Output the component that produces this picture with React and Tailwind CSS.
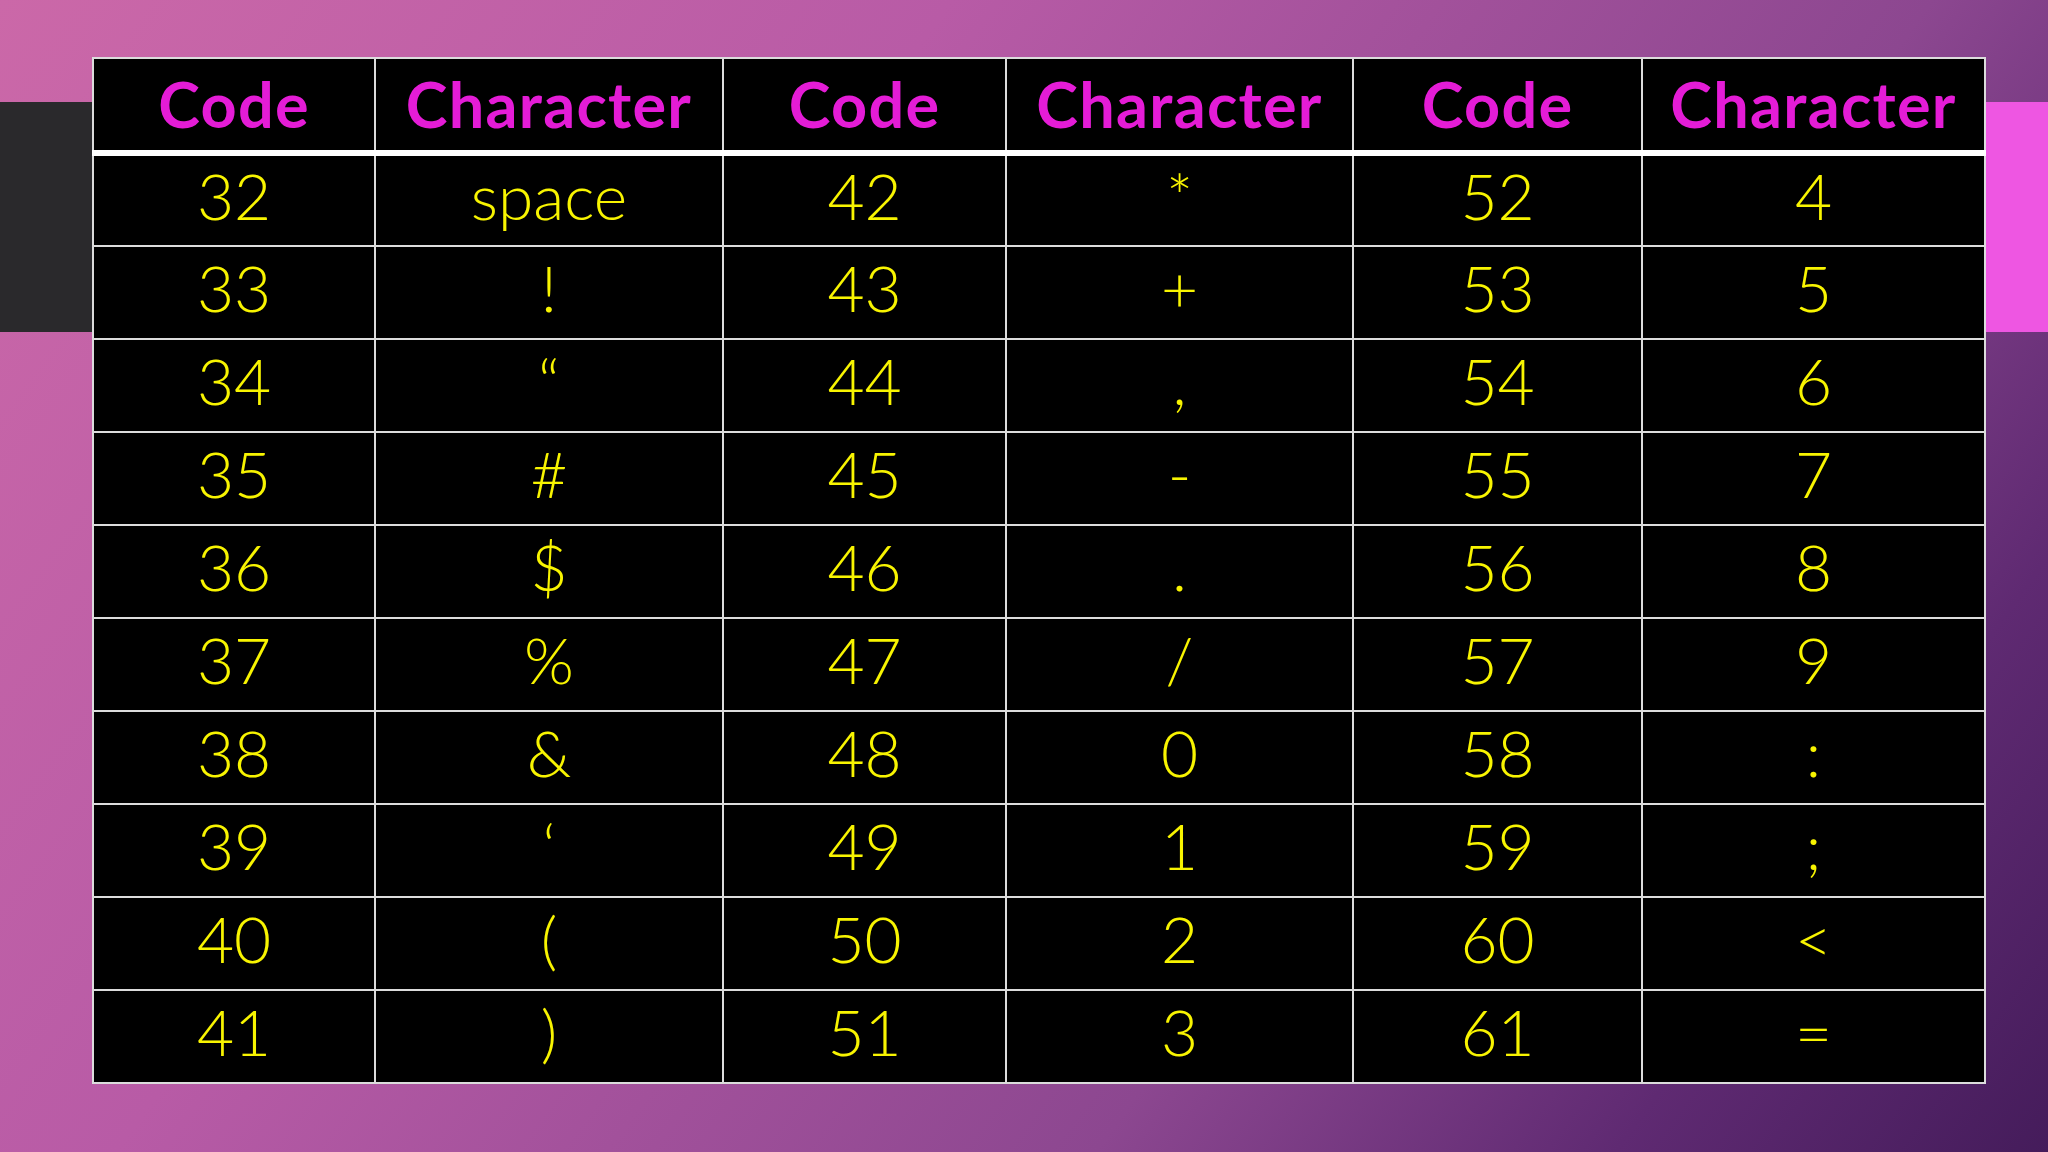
import React from "react";

// three pairs of code / character columns, ten rows each
const columns = [
  [
    ["32", "space"], ["33", "!"], ["34", "\u201C"], ["35", "#"], ["36", "$"],
    ["37", "%"], ["38", "&"], ["39", "\u2018"], ["40", "("], ["41", ")"],
  ],
  [
    ["42", "*"], ["43", "+"], ["44", ","], ["45", "-"], ["46", "."],
    ["47", "/"], ["48", "0"], ["49", "1"], ["50", "2"], ["51", "3"],
  ],
  [
    ["52", "4"], ["53", "5"], ["54", "6"], ["55", "7"], ["56", "8"],
    ["57", "9"], ["58", ":"], ["59", ";"], ["60", "<"], ["61", "="],
  ],
];

const widths = ["w-[282px]", "w-[348px]", "w-[283px]", "w-[347px]", "w-[289px]", "w-[343px]"];

const HeaderCell = ({ label }) => (
  <th className="h-[95px] border-2 border-[#dcdcdc] border-b-[6px] border-b-white p-0 pb-[2px] text-center align-middle font-bold text-[63px] tracking-[0.02em] leading-none text-[#e41cd6]">
    {label}
  </th>
);

const BodyCell = ({ value }) => (
  <td className="h-[93px] border-2 border-[#dcdcdc] p-0 pb-[9px] text-center align-middle font-light text-[64px] leading-none text-[#f8f400]">
    {value}
  </td>
);

function App() {
  const rows = columns[0].map((_, i) => columns.map((col) => col[i]));

  return (
    <div
      className="relative h-[1152px] w-[2048px] overflow-hidden bg-[linear-gradient(126deg,#cb68a8_0%,#b85ba6_33%,#8c4790_67%,#5f2a72_85%,#451c5b_100%)]"
      style={{ fontFamily: '"Lato", "Open Sans", sans-serif' }}
    >
      {/* decorative side bars behind the table */}
      <div className="absolute left-0 top-[102px] h-[230px] w-[120px] bg-[#2a292c]" />
      <div className="absolute right-0 top-[102px] h-[230px] w-[80px] bg-[#ee56e2]" />

      <div className="relative pl-[92px] pt-[57px]">
        <table className="table-fixed border-collapse bg-black border-2 border-[#dcdcdc]">
          <colgroup>
            {widths.map((w, i) => (
              <col key={i} className={w} />
            ))}
          </colgroup>
          <thead>
            <tr>
              {[0, 1, 2].map((i) => (
                <React.Fragment key={i}>
                  <HeaderCell label="Code" />
                  <HeaderCell label="Character" />
                </React.Fragment>
              ))}
            </tr>
          </thead>
          <tbody>
            {rows.map((row, r) => (
              <tr key={r}>
                {row.map(([code, ch], c) => (
                  <React.Fragment key={c}>
                    <BodyCell value={code} />
                    <BodyCell value={ch} />
                  </React.Fragment>
                ))}
              </tr>
            ))}
          </tbody>
        </table>
      </div>
    </div>
  );
}

export default App;
